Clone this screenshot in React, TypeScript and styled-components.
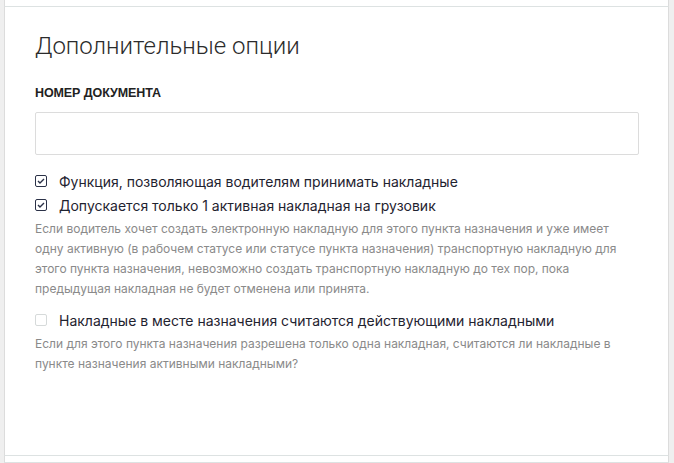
import styled, { createGlobalStyle } from "styled-components";

const GlobalStyle = createGlobalStyle`
  html, body {
    margin: 0;
    padding: 0;
    background: #efefef;
  }
  body {
    font-family: "Inter", "Liberation Sans", sans-serif;
    color: #1f2330;
  }
`;

const StyledPage = styled.div`
  display: flex;
  flex-direction: column;
  padding: 0 5px 0 4px;
  height: 463px;
  overflow: hidden;
`;

const StyledPanel = styled.section<{ $stub?: boolean; $grow?: boolean }>`
  background: #fff;
  border-left: 1px solid #dcdcdc;
  border-right: 1px solid #dcdcdc;
  border-bottom: 1px solid #dde2e2;
  height: ${({ $stub }) => ($stub ? "6px" : "auto")};
  flex: ${({ $grow }) => ($grow ? "1 0 auto" : "0 0 auto")};
`;

const StyledPanelBody = styled.div`
  padding: 25px 29px 0 30px;
  height: 448px;
  box-sizing: border-box;
`;

const StyledTitle = styled.h2`
  margin: 0;
  font-family: "Roboto", "Liberation Sans", sans-serif;
  font-weight: 300;
  font-size: 24px;
  line-height: 28px;
  color: #2b2b2b;
`;

const StyledFieldLabel = styled.label`
  display: block;
  margin: 26px 0 12px;
  font-family: "Liberation Sans", sans-serif;
  font-weight: 700;
  font-size: 12.5px;
  letter-spacing: -0.1px;
  line-height: 14px;
  color: #222;
`;

const StyledTextField = styled.input`
  display: block;
  width: 100%;
  height: 43px;
  box-sizing: border-box;
  margin: 0 0 14px;
  border: 1px solid #dcdcdc;
  border-radius: 2px;
  background: #fff;
  outline: none;
`;

const StyledOption = styled.label`
  display: flex;
  align-items: center;
  gap: 12px;
  height: 24px;
  font-size: 14px;
  color: #1f2330;
`;

const StyledBox = styled.span<{ $checked?: boolean }>`
  width: 12px;
  height: 12px;
  box-sizing: border-box;
  border: 1px solid ${({ $checked }) => ($checked ? "#2b3147" : "#d6dada")};
  border-radius: 2px;
  display: flex;
  align-items: center;
  justify-content: center;
  flex-shrink: 0;
`;

const StyledHint = styled.p`
  margin: 2px 0 9px;
  font-size: 12px;
  line-height: 20px;
  color: #8a8a8a;
`;

function CheckOption({ checked, children }: { checked?: boolean; children: string }) {
  return (
    <StyledOption>
      <StyledBox $checked={checked}>
        {checked && (
          <svg width="8" height="6" viewBox="0 0 8 6">
            <path d="M1 3l2 2 4-4" fill="none" stroke="#2b3147" strokeWidth="1.4" />
          </svg>
        )}
      </StyledBox>
      {children}
    </StyledOption>
  );
}

export default function App() {
  return (
    <>
      <GlobalStyle />
      <StyledPage>
        <StyledPanel $stub />
        <StyledPanel>
          <StyledPanelBody>
            <StyledTitle>Дополнительные опции</StyledTitle>
            <StyledFieldLabel htmlFor="docNumber">НОМЕР ДОКУМЕНТА</StyledFieldLabel>
            <StyledTextField id="docNumber" type="text" />
            <CheckOption checked>Функция, позволяющая водителям принимать накладные</CheckOption>
            <CheckOption checked>Допускается только 1 активная накладная на грузовик</CheckOption>
            <StyledHint>
              Если водитель хочет создать электронную накладную для этого пункта назначения и уже имеет
              одну активную (в рабочем статусе или статусе пункта назначения) транспортную накладную для
              этого пункта назначения, невозможно создать транспортную накладную до тех пор, пока
              предыдущая накладная не будет отменена или принята.
            </StyledHint>
            <CheckOption>Накладные в месте назначения считаются действующими накладными</CheckOption>
            <StyledHint>
              Если для этого пункта назначения разрешена только одна накладная, считаются ли накладные в
              пункте назначения активными накладными?
            </StyledHint>
          </StyledPanelBody>
        </StyledPanel>
        <StyledPanel $grow />
      </StyledPage>
    </>
  );
}
